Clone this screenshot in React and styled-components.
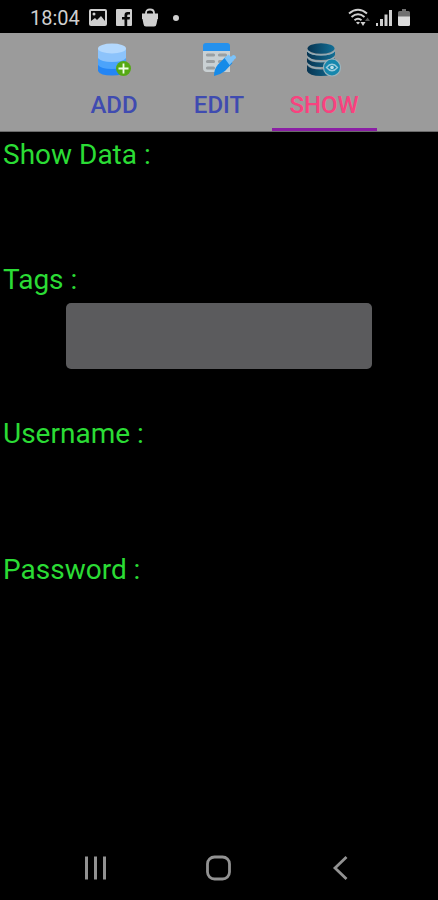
import React, { useState } from 'react'
import styled, { createGlobalStyle } from 'styled-components'

const TABS = [
    { id: 'add', text: 'ADD', Icon: AddIcon },
    { id: 'edit', text: 'EDIT', Icon: EditIcon },
    { id: 'show', text: 'SHOW', Icon: ShowIcon },
]

const App = () => {
    const [active, setActive] = useState('show')

    return (
        <>
        <GlobalStyle />
        <Screen>
            <StatusBar>
                <StatusGroup>
                    <Time>18:04</Time>
                    <PictureIcon />
                    <FacebookIcon />
                    <BagIcon />
                    <Dot />
                </StatusGroup>
                <StatusGroup $tight>
                    <WifiIcon />
                    <SignalIcon />
                    <BatteryIcon />
                </StatusGroup>
            </StatusBar>

            <TabBar role="tablist">
                {TABS.map(({ id, text, Icon }) => (
                    <Tab
                        key={id}
                        type="button"
                        role="tab"
                        aria-selected={active === id}
                        $active={active === id}
                        onClick={() => setActive(id)}
                    >
                        <Icon />
                        <TabText>{text}</TabText>
                    </Tab>
                ))}
            </TabBar>

            <Content>
                <Field $size="short">
                    <Label htmlFor="data">Show Data :</Label>
                    <Value id="data" />
                </Field>
                <Field $size="tall">
                    <Label htmlFor="tags">Tags :</Label>
                    <TagSelect id="tags" defaultValue="">
                        <option value=""></option>
                    </TagSelect>
                </Field>
                <Field>
                    <Label htmlFor="username">Username :</Label>
                    <Value id="username" />
                </Field>
                <Field>
                    <Label htmlFor="password">Password :</Label>
                    <Value id="password" />
                </Field>
            </Content>

            <NavBar>
                <NavButton type="button" aria-label="Recent apps">
                    <svg width="26" height="26" viewBox="0 0 26 26" stroke="currentColor" strokeWidth="3">
                        <path d="M3.500 1.500v23M12.500 1.500v23M21.500 1.500v23" />
                    </svg>
                </NavButton>
                <NavButton type="button" aria-label="Home">
                    <svg width="26" height="26" viewBox="0 0 26 26" fill="none" stroke="currentColor" strokeWidth="2.8">
                        <rect x="1.500" y="2" width="22" height="22" rx="7" />
                    </svg>
                </NavButton>
                <NavButton type="button" aria-label="Back">
                    <svg width="26" height="26" viewBox="0 0 26 26" fill="none" stroke="currentColor" strokeWidth="2.8">
                        <path d="M17.500 2L6 13l11.500 11" />
                    </svg>
                </NavButton>
            </NavBar>
        </Screen>
        </>
    )
}

function PictureIcon() {
    return (
        <svg width="18" height="17" viewBox="0 0 18 17">
            <rect width="18" height="17" rx="2" fill="#cfcfcf" />
            <path d="M2 2h14v10l-4-5-4 4-2-2-4 3z" fill="#080808" />
            <circle cx="5" cy="5" r="1.500" fill="#cfcfcf" />
        </svg>
    )
}

function FacebookIcon() {
    return (
        <svg width="16" height="17" viewBox="0 0 16 17">
            <rect width="16" height="17" rx="1" fill="#cfcfcf" />
            <path d="M8.500 17v-6.500H6V8h2.500V6q0-3 3-3H14v2.500h-1.600q-1.200 0-1.200 1.200V8H14l-.4 2.500h-2.400V17z" fill="#080808" />
        </svg>
    )
}

function BagIcon() {
    return (
        <svg width="18" height="19" viewBox="0 0 18 19">
            <path d="M5 7V5q0-3.500 4-3.500T13 5v2" fill="none" stroke="#cfcfcf" strokeWidth="1.800" />
            <path d="M1 5.500h16V11h-.5L15.500 16q-.3 2.500-2.500 2.500H5Q2.800 18.500 2.500 16l-1-5H1z" fill="#cfcfcf" />
        </svg>
    )
}

function WifiIcon() {
    return (
        <svg width="22" height="19" viewBox="0 0 22 19" fill="none" stroke="#cfcfcf">
            <path d="M1 5.500q9-7.500 18 0M3.500 9q6.500-5.500 13 0M6.500 12.300q3.500-3 7 0" strokeWidth="2" />
            <path d="M8 14.500q2-1.500 4 0l-2 2z" fill="#cfcfcf" stroke="none" />
            <path d="M12.500 14h5L15 18z" fill="#cfcfcf" stroke="none" />
            <path d="M17 13l2.500-3.500L22 13z" fill="#555" stroke="none" />
        </svg>
    )
}

function SignalIcon() {
    return (
        <svg width="16" height="17" viewBox="0 0 16 17" fill="#cfcfcf">
            <path d="M0 14h2v3H0zM4 10h3v7H4z" />
            <path d="M8.500 5.500h3V17h-3z" />
            <path d="M13 1h3v16h-3z" />
        </svg>
    )
}

function BatteryIcon() {
    return (
        <svg width="12" height="17" viewBox="0 0 12 17">
            <path d="M4 0h4v2h2.500Q12 2 12 3.500V8H0V3.500Q0 2 1.500 2H4z" fill="#707070" />
            <path d="M0 7.500h12v8q0 1.500-1.500 1.500h-9Q0 17 0 15.500z" fill="#dcdcdc" />
        </svg>
    )
}

function AddIcon() {
    return (
        <svg width="34" height="34" viewBox="0 0 34 34">
            <path d="M1 5v23q2 4.500 14 4.500T29 28V5z" fill="#2485f4" />
            <path d="M1 5v17q3 4 14 4t14-4V5z" fill="#4ba3fb" />
            <path d="M1 5v10q3 4 14 4t14-4V5z" fill="#8cc3fb" />
            <ellipse cx="15" cy="5.500" rx="14" ry="5" fill="#b3d8fd" />
            <circle cx="26.500" cy="25.500" r="7.500" fill="#55a914" />
            <path d="M26.500 20.500v10M21.500 25.500h10" stroke="#f2ffe8" strokeWidth="1.800" />
        </svg>
    )
}

function EditIcon() {
    return (
        <svg width="34" height="34" viewBox="0 0 34 34">
            <path d="M1 5h27v24H5q-4 0-4-4z" fill="#c9d0d3" />
            <path d="M1 8V3q0-3 3-3h21q3 0 3 3v5z" fill="#2591ed" />
            <path d="M5.500 12h6M17.500 12h6M5.500 18.500h6M17.500 18.500h6M5.500 25h6" stroke="#9a9fa2" strokeWidth="3.200" strokeLinecap="round" />
            <path d="M12 33q0-7 4-11.500l8-8 6.500 6.500-7.500 8q-5 4-11 5z" fill="#168be8" />
            <path d="M22.500 15l4-3.500 5.500 5.500-4.500 5z" fill="#7cc3fa" />
            <path d="M28 14.500l3-2.500q3 0 3 3l-3.500 3z" fill="#7cc3fa" />
        </svg>
    )
}

function ShowIcon() {
    return (
        <svg width="34" height="34" viewBox="0 0 34 34">
            <defs>
                <linearGradient id="disk" x1="0" y1="0" x2="1" y2="0">
                    <stop offset="0" stopColor="#073451" />
                    <stop offset="1" stopColor="#126f96" />
                </linearGradient>
            </defs>
            <g fill="url(#disk)">
                <ellipse cx="14" cy="5.500" rx="13.500" ry="5.200" />
                <path d="M0 8q3 4.500 14 4.500T28 8v4q-2 5-14 5T0 12z" />
                <path d="M0 15q3 4.500 14 4.500T28 15v4q-2 5-14 5T0 19z" />
                <path d="M0 22q3 4.500 14 4.500T28 22v6q-2 5-14 5T0 28z" />
            </g>
            <path d="M0 7.500q3 4.500 14 4.500t14-4.500M1 14q3 4.500 13 4.500T27 14M1 21q3 4.500 13 4.500" fill="none" stroke="#8fb0bf" strokeWidth="1.200" />
            <circle cx="25" cy="24.500" r="8.500" fill="#1687ad" stroke="#9bb4bd" strokeWidth="1.200" />
            <path d="M19.500 24.500q5.500-6.500 11 0-5.500 6.500-11 0z" fill="none" stroke="#9ccbdc" strokeWidth="1.300" />
            <circle cx="25" cy="24.500" r="1.800" fill="#bce0eb" />
        </svg>
    )
}

const GlobalStyle = createGlobalStyle`
* {
    box-sizing: border-box;
}
body {
    margin: 0;
    background: #000;
    font-family: Roboto, "Liberation Sans", sans-serif;
}
svg {
    display: block;
    flex-shrink: 0;
}
`;

const Screen = styled.div`
min-height: 100vh;
display: flex;
flex-direction: column;
background: #000;
`;

const StatusBar = styled.header`
height: 33px;
padding: 2px 28px 0 30px;
display: flex;
align-items: center;
justify-content: space-between;
`;

const StatusGroup = styled.div`
display: flex;
align-items: center;
gap: ${props => props.$tight ? "6px" : "9px"};
`;

const Time = styled.span`
color: #cfcfcf;
font-size: 20px;
line-height: 24px;
`;

const Dot = styled.span`
width: 6px;
height: 6px;
margin-left: 5px;
border-radius: 50%;
background: #cfcfcf;
`;

const TabBar = styled.div`
display: flex;
justify-content: center;
background: #9b9b9b;
border-bottom: 1px solid #6a6a6a;
`;

const Tab = styled.button`
flex: 0 1 105px;
padding: 10px 0 9px;
display: flex;
flex-direction: column;
align-items: center;
gap: 14px;
border: 0;
border-bottom: 3px solid ${props => props.$active ? "#8b1fa5" : "transparent"};
background: none;
color: ${props => props.$active ? "#f9427f" : "#3f4bb0"};
font-family: inherit;
cursor: pointer;
`;

const TabText = styled.span`
font-size: 24px;
font-weight: 500;
line-height: 28px;
`;

const Content = styled.main`
flex: 1;
padding: 5px 3px 0;
`;

const fieldHeights = {
    short: "125px",
    tall: "154px",
};

const Field = styled.div`
display: flex;
flex-direction: column;
min-height: ${props => fieldHeights[props.$size] || "136px"};
`;

const Label = styled.label`
color: #2bdc35;
font-size: 28px;
line-height: 36px;
`;

const Value = styled.output`
min-height: 36px;
color: #2bdc35;
font-size: 28px;
`;

const TagSelect = styled.select`
width: 71%;
height: 66px;
margin: 5px auto 0;
padding: 0 16px;
appearance: none;
border: 0;
border-radius: 5px;
background: #5b5b5d;
color: #fff;
font-family: inherit;
font-size: 24px;
`;

const NavBar = styled.nav`
height: 64px;
padding: 0 34px;
display: grid;
grid-template-columns: repeat(3, 1fr);
`;

const NavButton = styled.button`
display: flex;
align-items: center;
justify-content: center;
padding: 0;
border: 0;
background: none;
color: #929292;
cursor: pointer;
`;

export default App;
